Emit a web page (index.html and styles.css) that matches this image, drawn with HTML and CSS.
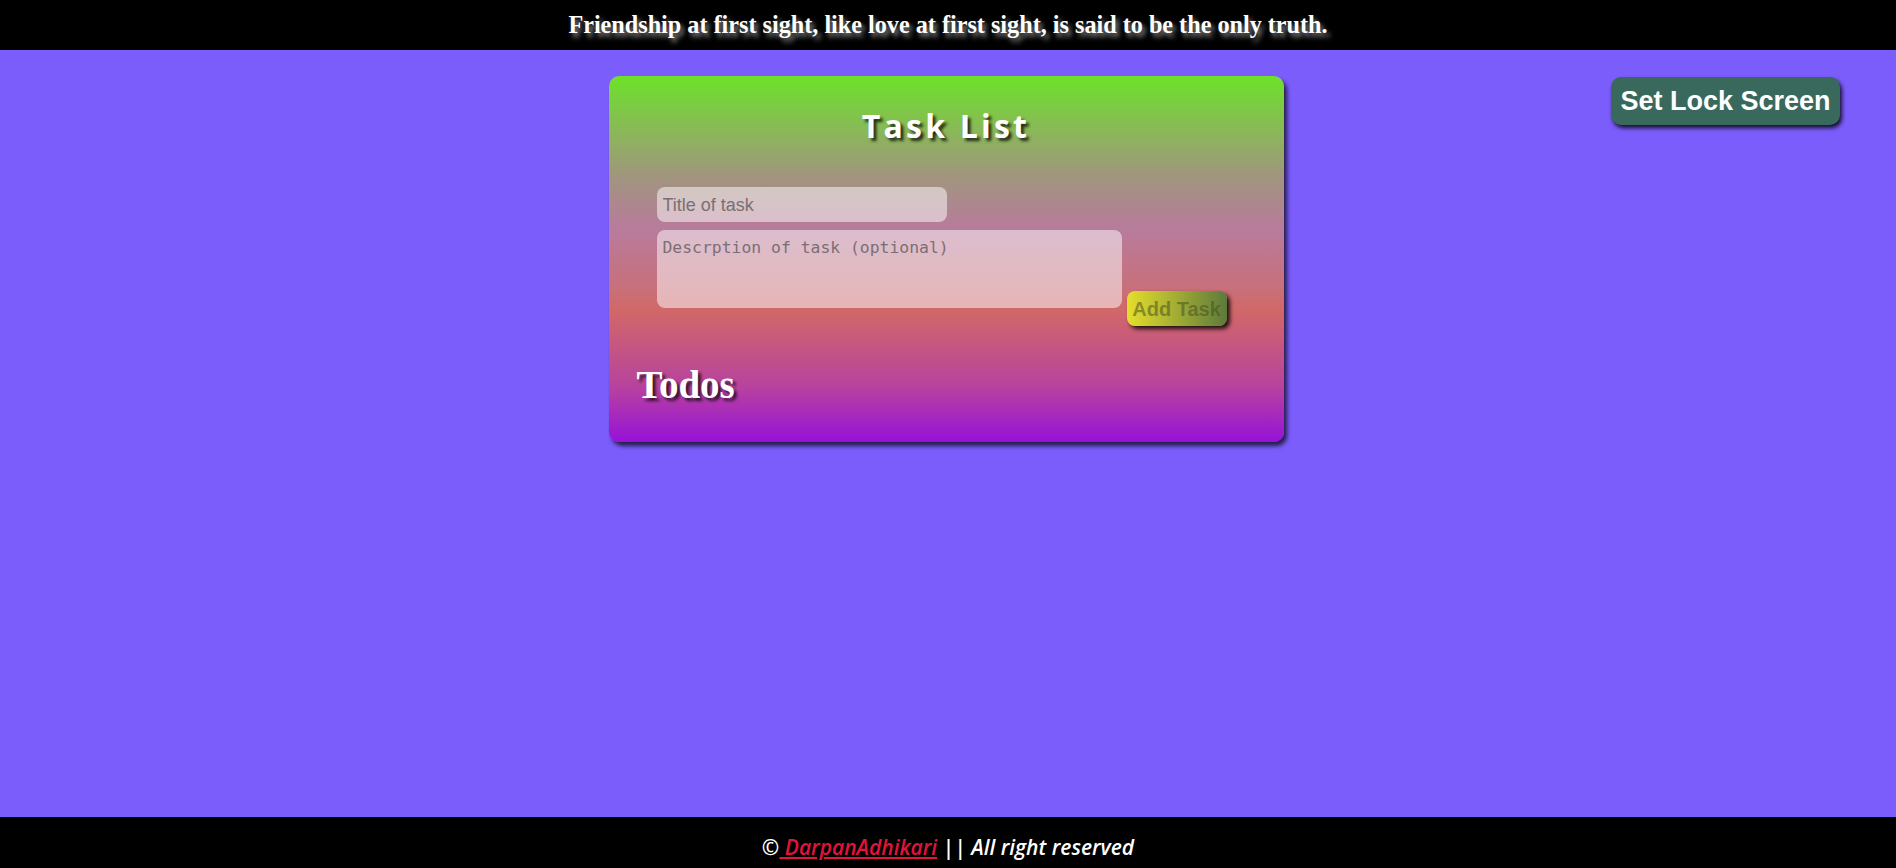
FILE: index.html
```html
<!DOCTYPE html>
<html lang="en">
<head>
<meta charset="UTF-8">
<title>Task List</title>
<link rel="stylesheet" href="styles.css">
</head>
<body>
<header class="quote-bar">
  <p class="quote">Friendship at first sight, like love at first sight, is said to be the only truth.</p>
</header>
<main class="page">
  <div class="spacer"></div>
  <section class="card">
    <h1 class="card-title">Task List</h1>
    <form class="task-form">
      <input class="title-input" type="text" placeholder="Title of task">
      <div class="desc-row">
        <textarea class="desc-input" placeholder="Descrption of task (optional)"></textarea>
        <button type="button" class="add-btn">Add Task</button>
      </div>
    </form>
    <h2 class="todos">Todos</h2>
  </section>
  <div class="side">
    <button type="button" class="lock-btn">Set Lock Screen</button>
  </div>
</main>
<footer class="footer">
  <p class="footer-text">&copy;<a class="footer-link" href="#"> DarpanAdhikari</a> || All right reserved</p>
</footer>
</body>
</html>
```
FILE: styles.css
```css
* { box-sizing: border-box; }
html, body { height: 100%; }
body {
  margin: 0;
  background: #7b5dfc;
  display: flex;
  flex-direction: column;
  min-height: 100vh;
  font-family: "Liberation Sans", Arial, sans-serif;
}
.quote-bar {
  background: #000;
  height: 50px;
  display: flex;
  align-items: center;
  justify-content: center;
}
.quote {
  margin: 0;
  font-family: "Liberation Serif", "Times New Roman", serif;
  font-weight: bold;
  font-size: 24.2px;
  color: #fff;
  text-shadow: 3px 4px 5px rgba(255,255,255,0.55);
}
.page {
  flex: 1;
  display: grid;
  grid-template-columns: 1fr 675px 1fr;
  align-items: start;
}
.card {
  margin: 26px 2px 0 -2px;
  height: 366px;
  border-radius: 10px;
  padding: 31px 0 0 0;
  background: linear-gradient(to bottom, #6de229 0%, #a29480 28%, #b87b9c 42%, #c8707a 58%, #d16868 64%, #b7429e 85%, #9612d8 100%);
  box-shadow: 3px 4px 4px rgba(0,0,0,0.7);
}
.card-title {
  margin: 0;
  text-align: center;
  font-family: "Open Sans", sans-serif;
  font-weight: 700;
  font-size: 32px;
  line-height: 38px;
  letter-spacing: 3.2px;
  color: #fff;
  text-shadow: 3px 3px 3px rgba(0,0,0,0.75);
}
.task-form {
  margin: 42px 0 0 48px;
  display: flex;
  flex-direction: column;
  gap: 8px;
}
.title-input {
  width: 290px;
  height: 35px;
  border: none;
  border-radius: 8px;
  background: rgba(255,255,255,0.5);
  padding: 1px 6px 0;
  font-family: "Liberation Sans", Arial, sans-serif;
  font-size: 18px;
  outline: none;
}
.title-input::placeholder { color: #7a6f74; }
.desc-row {
  display: flex;
  align-items: flex-start;
}
.desc-input {
  width: 465px;
  height: 78px;
  border: none;
  border-radius: 8px;
  background: rgba(255,255,255,0.5);
  padding: 8px 6px 6px;
  font-family: "DejaVu Sans Mono", monospace;
  font-size: 16.4px;
  resize: none;
  outline: none;
}
.desc-input::placeholder { color: #7a6f74; }
.add-btn {
  margin: 61px 0 0 5px;
  width: 100px;
  height: 35px;
  border: none;
  border-radius: 8px;
  padding: 1px 0 0;
  background: linear-gradient(to right, #e6de2b, #5c7a3c);
  color: rgba(70,80,30,0.55);
  font-family: "Liberation Sans", Arial, sans-serif;
  font-weight: bold;
  font-size: 20px;
  box-shadow: 3px 3px 4px rgba(0,0,0,0.85);
}
.todos {
  margin: 36px 0 0 28px;
  font-family: "Liberation Serif", "Times New Roman", serif;
  font-weight: bold;
  font-size: 39px;
  color: #fff;
  text-shadow: 3px 3px 3px rgba(0,0,0,0.7);
}
.side {
  display: flex;
  justify-content: flex-end;
  padding-right: 56px;
}
.lock-btn {
  margin-top: 27px;
  height: 48px;
  width: 229px;
  border: none;
  border-radius: 10px;
  background: #39695d;
  color: #fff;
  font-family: "Liberation Sans", Arial, sans-serif;
  font-weight: bold;
  font-size: 27px;
  padding: 0;
  box-shadow: 2px 3px 4px rgba(0,0,0,0.85);
}
.footer {
  background: #000;
  height: 51px;
  display: flex;
  align-items: center;
  justify-content: center;
  padding-top: 9px;
}
.footer-text {
  margin: 0;
  font-family: "Open Sans", sans-serif;
  font-style: italic;
  font-weight: 600;
  font-size: 21px;
  color: #fff;
}
.footer-link {
  color: #e0143c;
}
```
